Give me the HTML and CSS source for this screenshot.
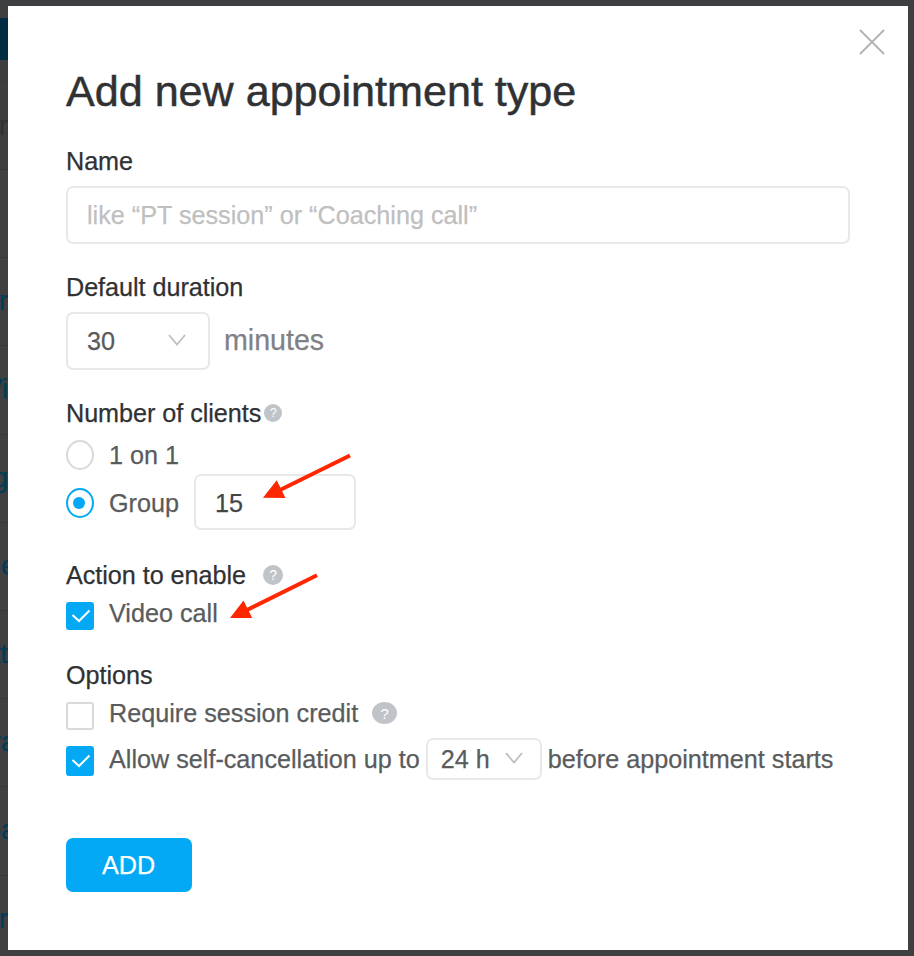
FILE: index.html
```html
<!DOCTYPE html>
<html lang="en">
<head>
  <meta charset="UTF-8">
  <meta name="viewport" content="width=device-width, initial-scale=1.0">
  <title>Add new appointment type</title>
  <link rel="stylesheet" href="styles.css">
</head>
<body>
  <!-- Page behind the dialog -->
  <div class="page">
    <div class="page-bar"></div>
    <div class="page-tools"></div>
    <div class="row row-head"><span>er</span></div>
    <div class="row"></div>
    <div class="row"><span>r</span></div>
    <div class="row"><span>Vi</span></div>
    <div class="row"><span>ng</span></div>
    <div class="row wide"><span>e</span></div>
    <div class="row"><span>tt</span></div>
    <div class="row wide"><span>ra</span></div>
    <div class="row wide"><span>ba</span></div>
    <div class="row"><span>or</span></div>
  </div>

  <div class="modal">
    <button class="close" aria-label="Close">
      <svg width="26" height="26" viewBox="0 0 26 26"><path d="M1 1L25 25M25 1L1 25"/></svg>
    </button>
    <h1>Add new appointment type</h1>

    <div class="field">
      <label class="label" for="name">Name</label>
      <input class="input" type="text" id="name" placeholder="like “PT session” or “Coaching call”">
    </div>

    <div class="field">
      <div class="label">Default duration</div>
      <div class="duration">
        <div class="select">
          <span>30</span>
          <svg class="chevron" width="18" height="12" viewBox="0 0 18 12"><path d="M1 1L9 10.5L17 1"/></svg>
        </div>
        <span class="unit">minutes</span>
      </div>
    </div>

    <div class="field">
      <div class="label">Number of clients<span class="help help-small">?</span></div>
      <div class="option option-single">
        <span class="radio"></span>
        <span class="text">1 on 1</span>
      </div>
      <div class="option option-group">
        <span class="radio checked"></span>
        <span class="text">Group</span>
        <input class="input count" type="text" value="15">
      </div>
    </div>

    <div class="field field-action">
      <div class="label">Action to enable<span class="help help-medium">?</span></div>
      <div class="option option-check">
        <span class="checkbox checked"><svg width="20" height="14" viewBox="0 0 20 14"><path d="M1.5 6L8 12L18.5 1.5"/></svg></span>
        <span class="text raised">Video call</span>
      </div>
    </div>

    <div class="field field-options">
      <div class="label">Options</div>
      <div class="option option-check">
        <span class="checkbox"></span>
        <span class="text raised">Require session credit</span>
        <span class="help help-large">?</span>
      </div>
      <div class="option option-cancel">
        <span class="checkbox tall checked"><svg width="20" height="14" viewBox="0 0 20 14"><path d="M1.5 6L8 12L18.5 1.5"/></svg></span>
        <span class="text">Allow self-cancellation up to</span>
        <div class="select select-small">
          <span>24 h</span>
          <svg class="chevron" width="18" height="12" viewBox="0 0 18 12"><path d="M1 1L9 10.5L17 1"/></svg>
        </div>
        <span class="text">before appointment starts</span>
      </div>
    </div>

    <button class="add">ADD</button>
  </div>

  <!-- Pointers drawn over the form -->
  <svg class="arrows" width="914" height="956" viewBox="0 0 914 956">
    <path class="shaft" d="M350 455.5L279 490.5M317 575.2L246 610.5"/>
    <path class="tip" d="M263 497.8L276.7 480.2L285.5 498ZM230 618L243.5 600.5L252.2 618Z"/>
  </svg>
</body>
</html>
```

FILE: styles.css
```css
* {
  box-sizing: border-box;
}
body {
  margin: 0;
  height: 956px;
  overflow: hidden;
  background: #404040;
  font-family: "Liberation Sans", Arial, sans-serif;
  font-size: 25.2px;
  color: #5a5b5c;
  -webkit-text-stroke: 0.25px;
}

/* page behind */
.page {
  padding-top: 18px;
  background: #3e3f40;
}
.page-bar {
  width: 8px;
  height: 42px;
  background: #002c42;
}
.page-tools {
  height: 24px;
  background: #3c3e40;
}
.row {
  display: flex;
  justify-content: flex-end;
  align-items: center;
  width: 8px;
  height: 88.2px;
  overflow: hidden;
  white-space: nowrap;
  border-bottom: 1px solid #383838;
  background: #404040;
  font-size: 27px;
  color: #003c58;
}
.row.wide {
  width: 16px;
}
.row-head {
  height: 86px;
  background: #3e3f40;
  color: #303234;
}

/* dialog */
.modal {
  position: absolute;
  top: 6px;
  left: 8px;
  width: 900px;
  height: 944px;
  padding: 55px 58px 0;
  background: #fff;
}
.close {
  position: absolute;
  top: 23px;
  right: 23px;
  display: flex;
  padding: 0;
  border: 0;
  background: none;
}
.close path {
  fill: none;
  stroke: #b2b2b2;
  stroke-width: 1.8;
}
h1 {
  margin: 0 0 26px;
  font-size: 43.1px;
  font-weight: normal;
  line-height: 60px;
  color: #303133;
  -webkit-text-stroke: 0.5px;
}
.field {
  margin-bottom: 29px;
}
.field-action {
  margin: 31px 0;
}
.field-options {
  margin-bottom: 58px;
}
.label {
  display: flex;
  align-items: center;
  height: 28px;
  margin-bottom: 11px;
  line-height: 28px;
  letter-spacing: -0.04px;
  color: #303133;
}
.input {
  display: block;
  width: 100%;
  height: 58px;
  padding: 0 19px;
  border: 2px solid #e8e8e8;
  border-radius: 7px;
  background: #fff;
  font: inherit;
  color: #444547;
}
.input::placeholder {
  color: #bfbfbf;
}
.duration {
  display: flex;
  align-items: center;
}
.select {
  display: flex;
  align-items: center;
  justify-content: space-between;
  width: 144px;
  height: 58px;
  padding: 0 22px 0 19px;
  border: 2px solid #e8e8e8;
  border-radius: 7px;
}
.chevron {
  margin-top: -3px;
}
.chevron path {
  fill: none;
  stroke: #bfbfbf;
  stroke-width: 1.8;
}
.unit {
  margin: 0 0 2px 14px;
  font-size: 28.6px;
  color: #808185;
}

/* options */
.option {
  display: flex;
  align-items: center;
}
.option .text {
  margin-left: 15px;
  line-height: 28px;
  white-space: nowrap;
}
.option-single {
  height: 30px;
  margin-top: 13px;
}
.option-group {
  height: 56px;
  margin-top: 4px;
}
.option-group .radio,
.option-group .text {
  margin-top: 2px;
}
.option-check {
  height: 28px;
  margin-top: 13px;
}
.option-cancel {
  height: 42px;
  margin-top: 8px;
}
.option .raised {
  margin-bottom: 6px;
}
.radio {
  flex: none;
  display: flex;
  align-items: center;
  justify-content: center;
  width: 28px;
  height: 30px;
  border: 2px solid #d9d9d9;
  border-radius: 50%;
}
.radio.checked {
  border-color: #03a9f4;
}
.radio.checked::before {
  content: "";
  width: 12px;
  height: 12px;
  margin-right: 2px;
  border-radius: 50%;
  background: #03a9f4;
}
.count {
  width: 162px;
  height: 56px;
  margin-left: 15px;
  padding-top: 2px;
}
.checkbox {
  flex: none;
  display: flex;
  align-items: center;
  justify-content: center;
  width: 28px;
  height: 28px;
  border: 2px solid #d9d9d9;
  border-radius: 3px;
}
.checkbox svg {
  margin-left: 2px;
}
.checkbox.tall {
  height: 30px;
  margin-top: 4px;
}
.checkbox.checked {
  border-color: #03a9f4;
  background: #03a9f4;
}
.checkbox path {
  fill: none;
  stroke: #fff;
  stroke-width: 2;
}
.select-small {
  width: 116px;
  height: 42px;
  margin-left: 6px;
  padding: 0 17px 0 13px;
}
.option .select-small + .text {
  margin-left: 6px;
}
.help {
  flex: none;
  display: flex;
  align-items: center;
  justify-content: center;
  border-radius: 50%;
  background: #c0c4c9;
  color: #fff;
  -webkit-text-stroke: 0;
}
.help-small {
  width: 18px;
  height: 18px;
  margin-left: 3px;
  font-size: 12px;
}
.help-medium {
  width: 20px;
  height: 20px;
  margin-left: 17px;
  font-size: 14px;
}
.help-large {
  width: 25px;
  height: 22px;
  margin: 0 0 6px 14px;
  font-size: 15px;
}
.add {
  display: block;
  width: 126px;
  height: 54px;
  padding: 0 1px 0 0;
  border: 0;
  border-radius: 7px;
  background: #03a9f4;
  font: inherit;
  color: #fff;
}

.arrows {
  position: absolute;
  top: 0;
  left: 0;
  pointer-events: none;
}
.arrows .shaft {
  fill: none;
  stroke: #ff2600;
  stroke-width: 4;
}
.arrows .tip {
  fill: #ff2600;
}
```
